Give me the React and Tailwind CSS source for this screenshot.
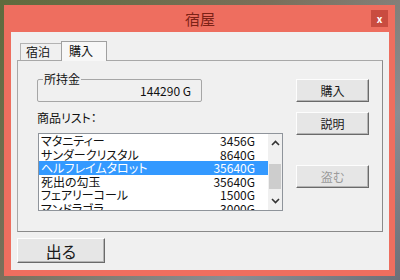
import React from 'react';

const items = [
  ['マタニティー', '3456G'],
  ['サンダークリスタル', '8640G'],
  ['ヘルフレイムタロット', '35640G'],
  ['死出の勾玉', '35640G'],
  ['フェアリーコール', '1500G'],
  ['マンドラゴラ', '3000G'],
];

const Btn = ({ children, disabled, className = '' }) => (
  <div
    className={`flex items-center justify-center bg-[#e6e6e6] border border-t-[#fdfdfd] border-l-[#fdfdfd] border-b-[#6a6a6a] border-r-[#6a6a6a] shadow-[inset_-1px_-1px_0_#b4b4b4] ${disabled ? 'text-[#9a9a9a]' : 'text-[#1a1a1a]'} ${className}`}
  >
    {children}
  </div>
);

const App = () => {
  return (
    <div className="w-[400px] h-[280px] overflow-hidden bg-[linear-gradient(135deg,#5f6b3d,#7a6f5a_40%,#8a8d93_75%,#6d7078)] pt-[5px] pl-[4px] [font-family:'Noto_Sans_CJK_JP',sans-serif] [font-feature-settings:'palt']">
      <div className="w-[391px] h-[271px] bg-[#ee6e5f] flex flex-col pl-[7px] pr-[6px] pb-[6px]">
        {/* title bar */}
        <div className="h-[27px] flex items-center relative">
          <div className="flex-1 text-center text-[15px] leading-[20px] text-[#7c2216] pt-[1px]">宿屋</div>
          <div className="absolute right-[1px] top-[5px] w-[17px] h-[17px] bg-[#c94c40] flex items-center justify-center text-white text-[10px] font-bold leading-none">x</div>
        </div>

        {/* client */}
        <div className="flex-1 bg-[#f0f0f0] flex flex-col px-[6px] pt-[8px] text-[12px] leading-[16px] text-[#111]">
          {/* tabs */}
          <div className="flex items-end h-[20px] pl-[3px]">
            <div className="w-[42px] h-[17px] border border-b-0 border-[#b3b3b3] bg-[#f0f0f0] pl-[5px] leading-[16px]">宿泊</div>
            <div className="w-[46px] h-[20px] -ml-[1px] border border-b-0 border-[#a0a0a0] bg-[#f7f7f7] pl-[7px] leading-[17px] relative top-[1px] z-10">購入</div>
          </div>

          {/* tab panel */}
          <div className="h-[172px] border border-[#a8a8a8] border-b-[#8a8a8a] border-r-[#8a8a8a] flex pl-[19px] pt-[18px]">
            {/* left column */}
            <div className="w-[246px] flex flex-col">
              <div className="w-[165px] h-[23px] border border-[#a6a6a6] rounded-[2px] relative flex items-center justify-end pr-[10px]">
                <span className="absolute left-[5px] -top-[9px] bg-[#f0f0f0] px-[1px] leading-[16px]">所持金</span>
                <span className="pt-[1px]">144290 G</span>
              </div>
              <div className="mt-[8px] h-[16px]">商品リスト：</div>
              <div className="mt-[7px] ml-[1px] w-[245px] h-[78px] border border-[#8f949b] bg-white flex">
                <div className="w-[229px] overflow-hidden">
                  {items.map(([name, price], i) => (
                    <div
                      key={name}
                      className={`h-[13.5px] leading-[13.5px] flex justify-between pl-[2px] pr-[13px] ${i === 2 ? 'bg-[#3399ff] text-white' : ''}`}
                    >
                      <span>{name}</span>
                      <span>{price}</span>
                    </div>
                  ))}
                </div>
                <div className="flex-1 bg-[#f0f0f0] flex flex-col items-center">
                  <svg width="9" height="6" viewBox="0 0 9 6" className="mt-[6px]">
                    <path d="M1 5 L4.5 1.5 L8 5" fill="none" stroke="#333" strokeWidth="1.6" />
                  </svg>
                  <div className="mt-[18px] w-[12px] h-[25px] bg-[#cdcdcd]" />
                  <svg width="9" height="6" viewBox="0 0 9 6" className="mt-[9px]">
                    <path d="M1 1 L4.5 4.5 L8 1" fill="none" stroke="#333" strokeWidth="1.6" />
                  </svg>
                </div>
              </div>
            </div>

            {/* right column */}
            <div className="ml-[13px] flex flex-col">
              <Btn className="w-[73px] h-[23px]">購入</Btn>
              <Btn className="w-[73px] h-[23px] mt-[10px]">説明</Btn>
              <Btn className="w-[73px] h-[23px] mt-[30px]" disabled>盗む</Btn>
            </div>
          </div>

          {/* bottom */}
          <div className="pt-[6px]">
            <Btn className="w-[88px] h-[25px] text-[16px]">出る</Btn>
          </div>
        </div>
      </div>
    </div>
  );
};

export default App;
